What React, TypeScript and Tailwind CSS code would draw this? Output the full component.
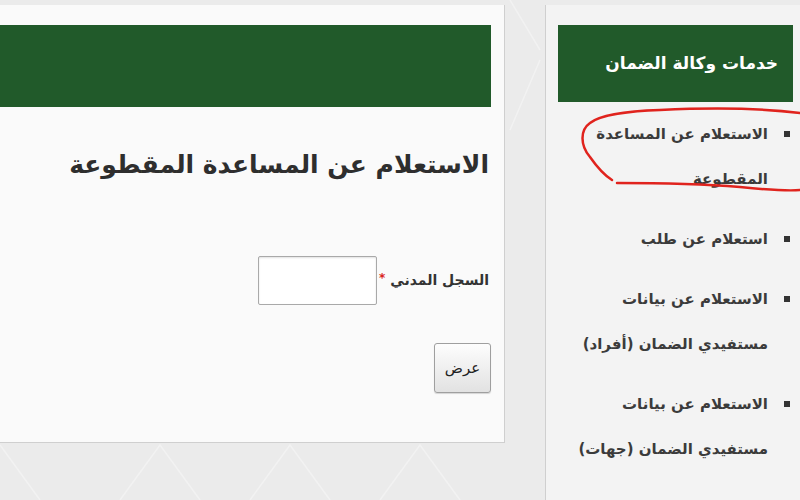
const services = [
  ["الاستعلام عن المساعدة", "المقطوعة"],
  ["استعلام عن طلب"],
  ["الاستعلام عن بيانات", "مستفيدي الضمان (أفراد)"],
  ["الاستعلام عن بيانات", "مستفيدي الضمان (جهات)"],
  ["الاستعلام عن حالة الطلب"],
]

function InquiryPanel() {
  return (
    <div className="mt-[5px] h-[438px] w-[505px] shrink-0 border-r border-b border-[#cfcfcf] bg-[#fafafa] pt-5 pr-[13px]">
      <div className="h-[82px] w-full bg-[#215a2a]" />

      <div dir="rtl">
        <h1 className="mt-[40px] whitespace-nowrap pr-[2px] text-[25px] font-bold leading-[36px] text-[#2e2e2e]">
          الاستعلام عن المساعدة المقطوعة
        </h1>

        {/* Civil registry field */}
        <div className="mt-[73px] flex items-center pr-[2px]">
          <label className="whitespace-nowrap text-[14px] font-bold text-[#333]">السجل المدني</label>
          <span className="mr-[5px] mb-[6px] text-[12px] font-bold text-[#d9241c]">*</span>
          <input
            type="text"
            className="mr-[2px] h-[49px] w-[119px] rounded-[2px] border border-[#a9a9a9] bg-white shadow-[inset_0_1px_2px_rgba(0,0,0,0.12)]"
          />
        </div>

        <button className="mt-[38px] h-[50px] w-[57px] rounded-[3px] border border-[#9f9f9f] bg-gradient-to-b from-[#fdfdfd] to-[#e2e2e2] text-[15px] text-[#222] shadow-[0_1px_1px_rgba(0,0,0,0.15)]">
          عرض
        </button>
      </div>
    </div>
  )
}

function ServicesPanel() {
  return (
    <div className="mt-[5px] h-[495px] w-[255px] shrink-0 border-l border-[#cfcfcf] bg-[#f3f3f3] pt-5 pl-[12px] pr-[7px]">
      <div dir="rtl" className="flex h-[77px] items-center bg-[#215a2a] pr-[15px]">
        <span className="whitespace-nowrap text-[17px] font-bold text-white">خدمات وكالة الضمان</span>
      </div>

      <ul dir="rtl" className="mt-[10px] flex flex-col gap-[15px] pr-[3px]">
        {services.map((lines, i) => (
          <li key={i} className="flex items-start">
            <span className="mt-[19px] h-[6px] w-[6px] shrink-0 bg-[#333]" />
            <div className="mr-[16px] whitespace-nowrap text-[15px] font-bold leading-[45px] text-[#3b3b3b]">
              {lines.map((l, j) => (
                <div key={j}>{l}</div>
              ))}
            </div>
          </li>
        ))}
      </ul>
    </div>
  )
}

export default function App() {
  return (
    <div className="relative h-[500px] w-[800px] overflow-hidden bg-[#ebebeb] font-['DejaVu_Sans','Noto_Sans',sans-serif]">
      {/* faint background pattern */}
      <svg className="absolute inset-0" width="800" height="500">
        <g stroke="#f2f2f2" strokeWidth="1.5" fill="none">
          <path d="M0 445 L40 500 M120 500 L160 445 L200 500 M250 500 L290 445 L330 500 M380 500 L420 445 L460 500" />
          <path d="M510 0 L540 50 M510 130 L540 60" />
        </g>
      </svg>

      <div className="relative flex gap-[40px]">
        <InquiryPanel />
        <ServicesPanel />
      </div>

      {/* hand-drawn red mark */}
      <svg className="pointer-events-none absolute inset-0" width="800" height="500">
        <path
          d="M800 113 C760 108 703 108 660 110 C630 111 600 115 590 123 C580 130 580 145 590 157 C597 167 604 175 612 180"
          stroke="#e0231d"
          strokeWidth="2.5"
          fill="none"
          strokeLinecap="round"
        />
        <path
          d="M617 183 C660 183 703 184 740 187 C770 190 790 191 800 190"
          stroke="#e0231d"
          strokeWidth="2.5"
          fill="none"
          strokeLinecap="round"
        />
      </svg>
    </div>
  )
}
